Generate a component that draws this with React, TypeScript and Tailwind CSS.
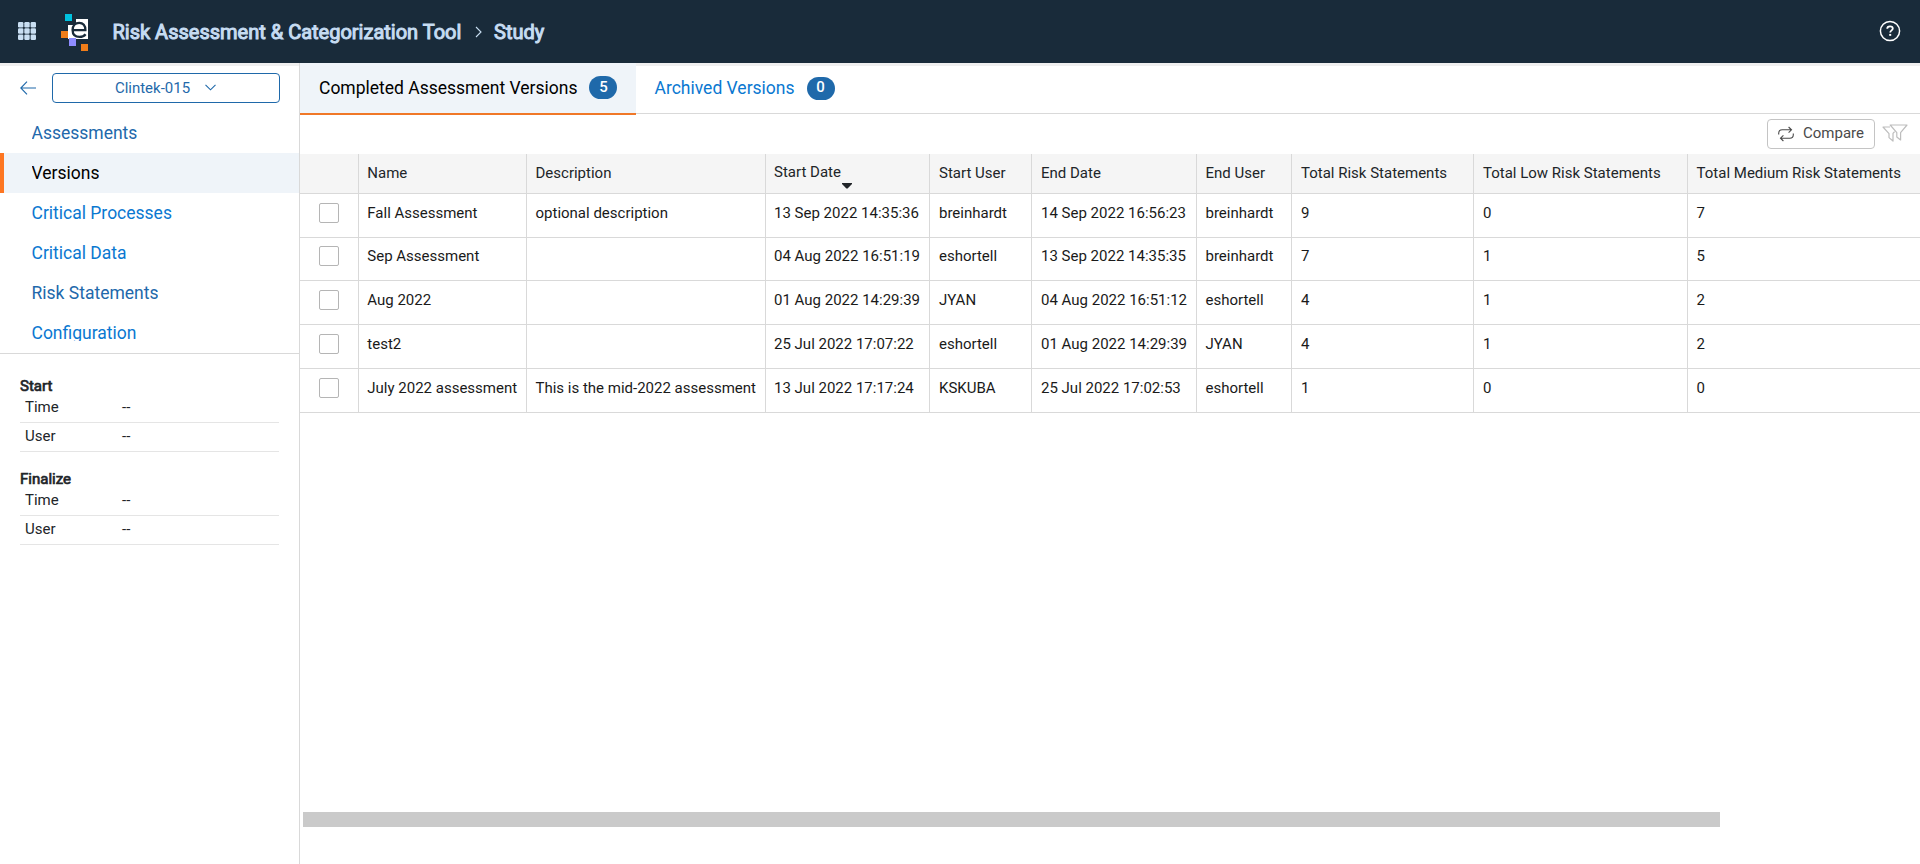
import { useState } from 'react';
import clsx from 'clsx';

interface Version {
  name: string;
  description: string;
  startDate: string;
  startUser: string;
  endDate: string;
  endUser: string;
  total: number;
  low: number;
  medium: number;
}

const NAV = [
  { label: 'Assessments', color: 'text-[#2268ab]' },
  { label: 'Versions', color: 'text-black' },
  { label: 'Critical Processes', color: 'text-[#0a78d1]' },
  { label: 'Critical Data', color: 'text-[#0a78d1]' },
  { label: 'Risk Statements', color: 'text-[#2268ab]' },
  { label: 'Configuration', color: 'text-[#0a78d1]' },
];

const COLUMNS: { key: keyof Version; label: string; width: string }[] = [
  { key: 'name', label: 'Name', width: 'w-[168px] pl-[8.3px]' },
  { key: 'description', label: 'Description', width: 'w-[239px] pl-[8.5px]' },
  { key: 'startDate', label: 'Start Date', width: 'w-[164px] pl-2' },
  { key: 'startUser', label: 'Start User', width: 'w-[102px] pl-[9px]' },
  { key: 'endDate', label: 'End Date', width: 'w-[165px] pl-[9px]' },
  { key: 'endUser', label: 'End User', width: 'w-[95px] pl-[8.5px]' },
  { key: 'total', label: 'Total Risk Statements', width: 'w-[182px] pl-[9px]' },
  { key: 'low', label: 'Total Low Risk Statements', width: 'w-[214px] pl-[9px]' },
  { key: 'medium', label: 'Total Medium Risk Statements', width: 'w-[240px] pl-[8.6px]' },
];

const VERSIONS: Version[] = [
  { name: 'Fall Assessment', description: 'optional description', startDate: '13 Sep 2022 14:35:36', startUser: 'breinhardt', endDate: '14 Sep 2022 16:56:23', endUser: 'breinhardt', total: 9, low: 0, medium: 7 },
  { name: 'Sep Assessment', description: '', startDate: '04 Aug 2022 16:51:19', startUser: 'eshortell', endDate: '13 Sep 2022 14:35:35', endUser: 'breinhardt', total: 7, low: 1, medium: 5 },
  { name: 'Aug 2022', description: '', startDate: '01 Aug 2022 14:29:39', startUser: 'JYAN', endDate: '04 Aug 2022 16:51:12', endUser: 'eshortell', total: 4, low: 1, medium: 2 },
  { name: 'test2', description: '', startDate: '25 Jul 2022 17:07:22', startUser: 'eshortell', endDate: '01 Aug 2022 14:29:39', endUser: 'JYAN', total: 4, low: 1, medium: 2 },
  { name: 'July 2022 assessment', description: 'This is the mid-2022 assessment', startDate: '13 Jul 2022 17:17:24', startUser: 'KSKUBA', endDate: '25 Jul 2022 17:02:53', endUser: 'eshortell', total: 1, low: 0, medium: 0 },
];

function AppsIcon() {
  return (
    <svg width="18" height="18" viewBox="0 0 18 18" fill="#c9dff2">
      {[0, 6.3, 12.6].map(y => [0, 6.3, 12.6].map(x => (
        <rect key={`${x}-${y}`} x={x} y={y} width="5.4" height="5.4" rx="1.2" />
      )))}
    </svg>
  );
}

function Logo() {
  return (
    <svg width="28" height="37" viewBox="0 0 28 37" shapeRendering="crispEdges">
      <rect x="4" y="0" width="7" height="7" fill="#00c1de" />
      <path d="M15 5h12v20H7V11h8z" fill="#fff" />
      <rect x="0" y="17" width="7" height="7" fill="#f07d1a" />
      <rect x="8" y="24" width="7" height="8" fill="#8f8cff" />
      <rect x="20" y="30" width="7" height="7" fill="#f07d1a" />
      <path d="M11.6 16.2H24.4C24.6 11.6 22 8.8 18.2 8.8C14.2 8.8 11.6 11.8 11.6 16C11.6 20.4 14.4 22.9 18.6 22.9C21.2 22.9 23.2 22 24.6 20.2" fill="none" stroke="#192b3a" strokeWidth="2.3" shapeRendering="auto" />
    </svg>
  );
}

function HelpIcon() {
  return (
    <svg width="22" height="22" viewBox="0 0 22 22" fill="none" stroke="#fff">
      <circle cx="11" cy="11" r="9.6" strokeWidth="1.5" />
      <path d="M8.2 8.8C8.2 7.2 9.4 6.3 11 6.3C12.6 6.3 13.8 7.2 13.8 8.6C13.8 10.4 11.2 10.4 11.2 12.6" strokeWidth="1.8" />
      <path d="M10.2 14.9h2" strokeWidth="1.9" />
    </svg>
  );
}

function CompareIcon() {
  return (
    <svg width="16" height="16" viewBox="0 0 16 16" fill="none" stroke="#4a4a4a" strokeWidth="1.1">
      <path d="M.7 8.5V7.3Q.7 3.8 4.2 3.8H13.4M10.6 1l2.9 2.8-2.9 2.8" />
      <path d="M15.3 7.5v1.2q0 3.5-3.5 3.5H2.6M5.4 9.4l-2.9 2.8L5.4 15" />
    </svg>
  );
}

function FilterIcon() {
  return (
    <svg width="26" height="18" viewBox="0 0 26 18" fill="none" stroke="#bdbdbd" strokeWidth="1.2" strokeLinejoin="round">
      <path d="M8.2 1H25L18.6 8.6V16L14.8 13V8.6z" />
      <path d="M8 3H1L7 9.6V13.6L11 17V9.4L12.6 7.6" />
    </svg>
  );
}

function Badge({ count }: { count: number }) {
  return (
    <span className="flex h-[23px] w-7 items-center justify-center rounded-full bg-[#1f69aa] pb-px text-[15px] font-medium text-white">
      {count}
    </span>
  );
}

function InfoGroup({ title }: { title: string }) {
  return (
    <div className="h-[93px]">
      <div className="h-[18px] text-[15px] leading-[21px] [-webkit-text-stroke:0.7px]">{title}</div>
      {['Time', 'User'].map(label => (
        <div key={label} className="flex h-[29px] border-b border-[#e5e5e5] pt-[3px] pl-[5px] text-[15px] leading-[21px]">
          <span className="w-[97px]">{label}</span>
          <span>--</span>
        </div>
      ))}
    </div>
  );
}

export default function App() {
  const [active, setActive] = useState('Versions');

  return (
    <div className="flex h-[864px] w-[1920px] flex-col overflow-hidden bg-white font-['Roboto',sans-serif] text-[#212529]">
      <header className="flex h-[63px] shrink-0 items-center bg-[#192b3a] pr-[19px] pl-[18px]">
        <div className="-mt-[2px]"><AppsIcon /></div>
        <div className="mt-[2px] ml-[25px]"><Logo /></div>
        <h1 className="ml-[23.5px] flex items-center text-xl whitespace-nowrap text-[#c6dcf2] [-webkit-text-stroke:1px]">
          <span className="w-[348.5px]">Risk Assessment &amp; Categorization Tool</span>
          <svg className="mr-[12px] ml-[14px]" width="7" height="12" viewBox="0 0 7 12" fill="none" stroke="#c9dff2" strokeWidth="1.1">
            <path d="M1 1l5 5-5 5" />
          </svg>
          <span>Study</span>
        </h1>
        <div className="-mt-[2px] ml-auto"><HelpIcon /></div>
      </header>

      <div className="flex min-h-0 flex-1">
        <aside className="w-[300px] shrink-0 border-r border-[#d9d9d9]">
          <div className="flex h-[50px] items-start border-t-[3px] border-[#efefef] pt-[7px] pl-5">
            <button className="mt-2 w-8">
              <svg width="16" height="14" viewBox="0 0 16 14" fill="none" stroke="#1f69aa" strokeWidth="1.1">
                <path d="M16 7H.8M7 .6L.8 7 7 13.4" />
              </svg>
            </button>
            <button className="flex h-[30px] w-[228px] items-center justify-center gap-[15px] rounded-[4px] border border-[#1f69aa] pr-px text-[15px] text-[#1f69aa]">
              Clintek-015
              <svg className="-mt-[2px]" width="11" height="7" viewBox="0 0 11 7" fill="none" stroke="#1f69aa" strokeWidth="1.1">
                <path d="M.5.8l5 5 5-5" />
              </svg>
            </button>
          </div>

          <nav className="h-[241px] border-b border-[#d9d9d9]">
            {NAV.map(item => (
              <a
                key={item.label}
                onClick={() => setActive(item.label)}
                className={clsx(
                  'flex h-10 items-start border-l-4 pt-[7px] pl-[27.5px] text-[17.5px]',
                  item.color,
                  item.label === active ? 'border-[#fd7622] bg-[#eff4f9]' : 'border-transparent',
                )}
              >
                <span className="h-[21px] overflow-hidden leading-[27px]">{item.label}</span>
              </a>
            ))}
          </nav>

          <div className="pt-[22px] pr-5 pl-5">
            <InfoGroup title="Start" />
            <InfoGroup title="Finalize" />
          </div>
        </aside>

        <main className="flex min-w-0 flex-1 flex-col">
          <div className="flex h-[52px] shrink-0 text-[17.5px]">
            <div className="flex h-[52px] w-[336px] items-center gap-3 border-b-2 border-[#f07828] bg-[#eff4f9] pb-px pl-[19px] text-black">
              <span className="pt-px">Completed Assessment Versions</span>
              <Badge count={5} />
            </div>
            <div className="flex h-[51px] flex-1 items-center gap-3 border-t-[3px] border-b border-t-[#efefef] border-b-[#d9d9d9] pb-[3px] pl-[18.5px] text-[#0a78d1]">
              Archived Versions
              <Badge count={0} />
            </div>
          </div>

          <div className="flex h-[39px] shrink-0 items-start justify-end gap-[7px] pt-1 pr-3">
            <button className="flex h-[30px] w-[108px] items-center gap-[9px] rounded-[4px] border border-[#c4c4c4] pl-[10px] text-[15px] text-[#4a4a4a]">
              <CompareIcon />
              <span className="-mt-[2px]">Compare</span>
            </button>
            <div className="mt-[5px]"><FilterIcon /></div>
          </div>

          <div className="w-full shrink-0 overflow-hidden text-[15px] leading-5 whitespace-nowrap">
            <div className="flex h-10 bg-[#f5f5f5]">
              <div className="w-[59px] shrink-0 border-r border-b border-[#d9d9d9]" />
              {COLUMNS.map(col => (
                <div key={col.key} className={clsx('relative shrink-0 border-r border-b border-[#d9d9d9]', col.width, col.key === 'startDate' ? 'pt-2' : 'pt-[9px]')}>
                  {col.label}
                  {col.key === 'startDate' && (
                    <svg className="absolute top-[29px] left-[76px]" width="10" height="6" viewBox="0 0 10 6" fill="#212529">
                      <path d="M0 0h10v1L5.6 5.6H4.4L0 1z" />
                    </svg>
                  )}
                </div>
              ))}
            </div>
            {VERSIONS.map((row, i) => (
              <div key={row.name} className={clsx('flex', i === 1 ? 'h-[43px]' : 'h-11')}>
                <div className={clsx('w-[59px] shrink-0 border-r border-b border-[#d9d9d9] pl-[19px]', i === 1 ? 'pt-2' : 'pt-[9px]')}>
                  <div className="size-5 rounded-[2px] border border-[#b5b5b5]" />
                </div>
                {COLUMNS.map(col => (
                  <div key={col.key} className={clsx('shrink-0 border-r border-b border-[#d9d9d9] text-[#1a1a1a]', col.width, i === 1 ? 'pt-2' : 'pt-[9px]')}>
                    {row[col.key]}
                  </div>
                ))}
              </div>
            ))}
          </div>

          {/* horizontal scrollbar thumb */}
          <div className="mt-auto mb-[37px] ml-[3px] h-[15px] w-[1417px] bg-[#cacaca]" />
        </main>
      </div>
    </div>
  );
}
